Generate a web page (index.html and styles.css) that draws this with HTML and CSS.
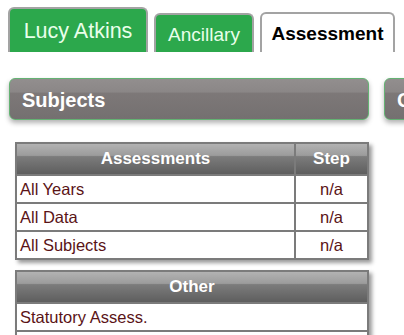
FILE: index.html
```html
<!DOCTYPE html>
<html lang="en">
<head>
    <meta charset="UTF-8">
    <meta name="viewport" content="width=device-width, initial-scale=1.0">
    <title>Lucy Atkins - Assessment</title>
    <link rel="stylesheet" href="styles.css">
</head>
<body>
    <!-- Pestañas -->
    <div class="tabs">
        <div class="tab tab-name">Lucy Atkins</div>
        <div class="tab tab-small">Ancillary</div>
        <div class="tab tab-active">Assessment</div>
    </div>

    <div class="panels">
        <div class="panel">
            <div class="panel-header">Subjects</div>

            <table class="grid">
                <thead>
                    <tr>
                        <th>Assessments</th>
                        <th class="step">Step</th>
                    </tr>
                </thead>
                <tbody>
                    <tr><td>All Years</td><td class="center">n/a</td></tr>
                    <tr><td>All Data</td><td class="center">n/a</td></tr>
                    <tr><td>All Subjects</td><td class="center">n/a</td></tr>
                </tbody>
            </table>

            <table class="grid">
                <thead>
                    <tr><th>Other</th></tr>
                </thead>
                <tbody>
                    <tr><td>Statutory Assess.</td></tr>
                    <tr><td></td></tr>
                </tbody>
            </table>
        </div>

        <div class="panel">
            <div class="panel-header">Current</div>
        </div>
    </div>
</body>
</html>
```

FILE: styles.css
```css
body {
    font-family: 'Liberation Sans', Arial, sans-serif;
    margin: 0;
    padding: 0;
    background-color: #fff;
    overflow: hidden;
}

/* Pestañas */
.tabs {
    display: flex;
    align-items: flex-end;
    gap: 6px;
    padding-left: 8px;
    height: 52px;
}

.tab {
    border: 2px solid #a3a3a3;
    border-bottom: none;
    border-radius: 6px 6px 0 0;
    background-color: #2ca84c;
    color: #e9ffea;
    text-align: center;
}

.tab-name {
    width: 136px;
    height: 43px;
    line-height: 44px;
    font-size: 21.5px;
}

.tab-small {
    width: 96px;
    height: 37px;
    line-height: 39px;
    font-size: 19px;
}

.tab-active {
    width: 131px;
    height: 38px;
    line-height: 40px;
    font-size: 19px;
    font-weight: bold;
    background-color: #fff;
    color: #000;
}

/* Paneles */
.panels {
    display: flex;
    gap: 15px;
    margin-top: 26px;
    padding-left: 9px;
}

.panel {
    flex: 0 0 360px;
}

.panel-header {
    height: 37px;
    padding: 3px 0 0 12px;
    line-height: 37px;
    border: 1px solid #64b273;
    border-radius: 6px;
    background: linear-gradient(#928e8e, #8b8787 32%, #7d7878 36%, #747070);
    box-shadow: 0 3px 5px rgba(0, 0, 0, 0.3);
    color: #fff;
    font-size: 20px;
    font-weight: bold;
}

/* Tablas */
.grid {
    width: 354px;
    margin-left: 6px;
    border-collapse: collapse;
    box-shadow: 3px 3px 4px rgba(0, 0, 0, 0.4);
}

.panel-header + .grid {
    margin-top: 22px;
}

.grid + .grid {
    margin-top: 10px;
}

th, td {
    border: 2px solid #7b7b7b;
    padding: 0 3px;
}

th {
    height: 30px;
    background: linear-gradient(#b2b2b2, #9c9c9c 38%, #7c7c7c 42%, #5e5e5e);
    color: #fff;
    font-size: 17px;
    font-weight: bold;
    text-align: center;
}

th.step {
    width: 65px;
}

td {
    height: 26px;
    background-color: #fff;
    color: #5a1316;
    font-size: 16.5px;
}

td.center {
    text-align: center;
}
```
